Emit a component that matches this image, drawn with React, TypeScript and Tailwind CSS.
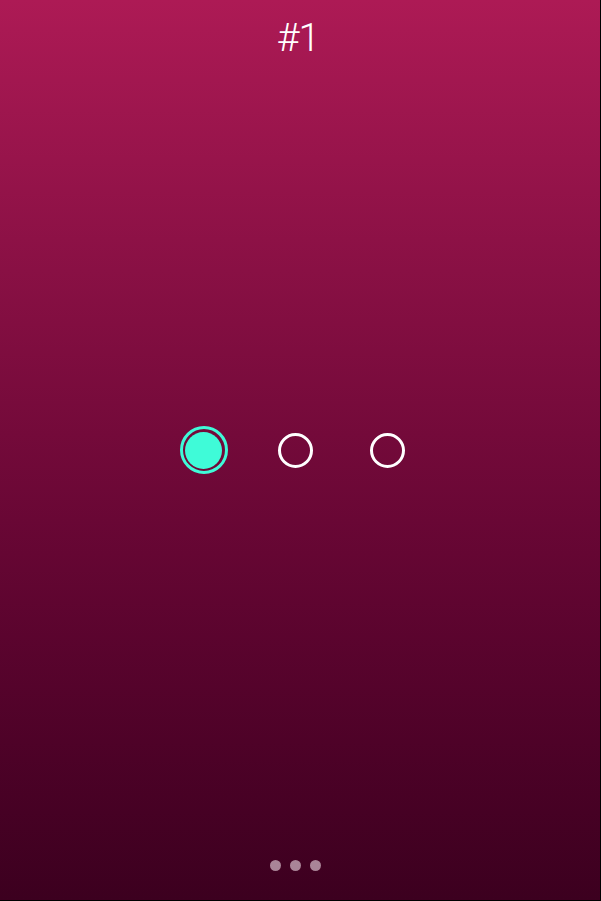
import React from "react";

// Option picker slide, step #1
const options = [0, 1, 2];

export default function App() {
  const selected = 0;

  return (
    <div className="w-[601px] h-[901px] bg-black">
      <div
        className="w-[600px] h-[900px] grid grid-rows-[1fr_auto_1fr] bg-gradient-to-b from-[#ad1a55] to-[#3c001f]"
        style={{ fontFamily: "Roboto, 'Noto Sans', sans-serif" }}
      >
        {/* Title */}
        <div className="flex justify-center items-start pt-[19px] pr-[4px]">
          <h1 className="text-[39px] leading-none font-light text-white tracking-[-1px]">#1</h1>
        </div>

        {/* Options */}
        <div className="flex justify-center items-center gap-[44px] pr-[9px]">
          {options.map((i) =>
            i === selected ? (
              <div
                key={i}
                className="w-[48px] h-[48px] rounded-full border-[3px] border-[#3ffbd8] flex items-center justify-center"
              >
                <div className="w-[37px] h-[37px] rounded-full bg-[#3ffbd8]" />
              </div>
            ) : (
              <div key={i} className="w-[48px] h-[48px] flex items-center justify-center">
                <div className="w-[35px] h-[35px] rounded-full border-[3px] border-white" />
              </div>
            )
          )}
        </div>

        {/* Page indicator */}
        <div className="flex justify-center items-end gap-[9px] pb-[29px] pr-[9px]">
          {[0, 1, 2].map((i) => (
            <span key={i} className="w-[11px] h-[11px] rounded-full bg-[#a98497]" />
          ))}
        </div>
      </div>
    </div>
  );
}
